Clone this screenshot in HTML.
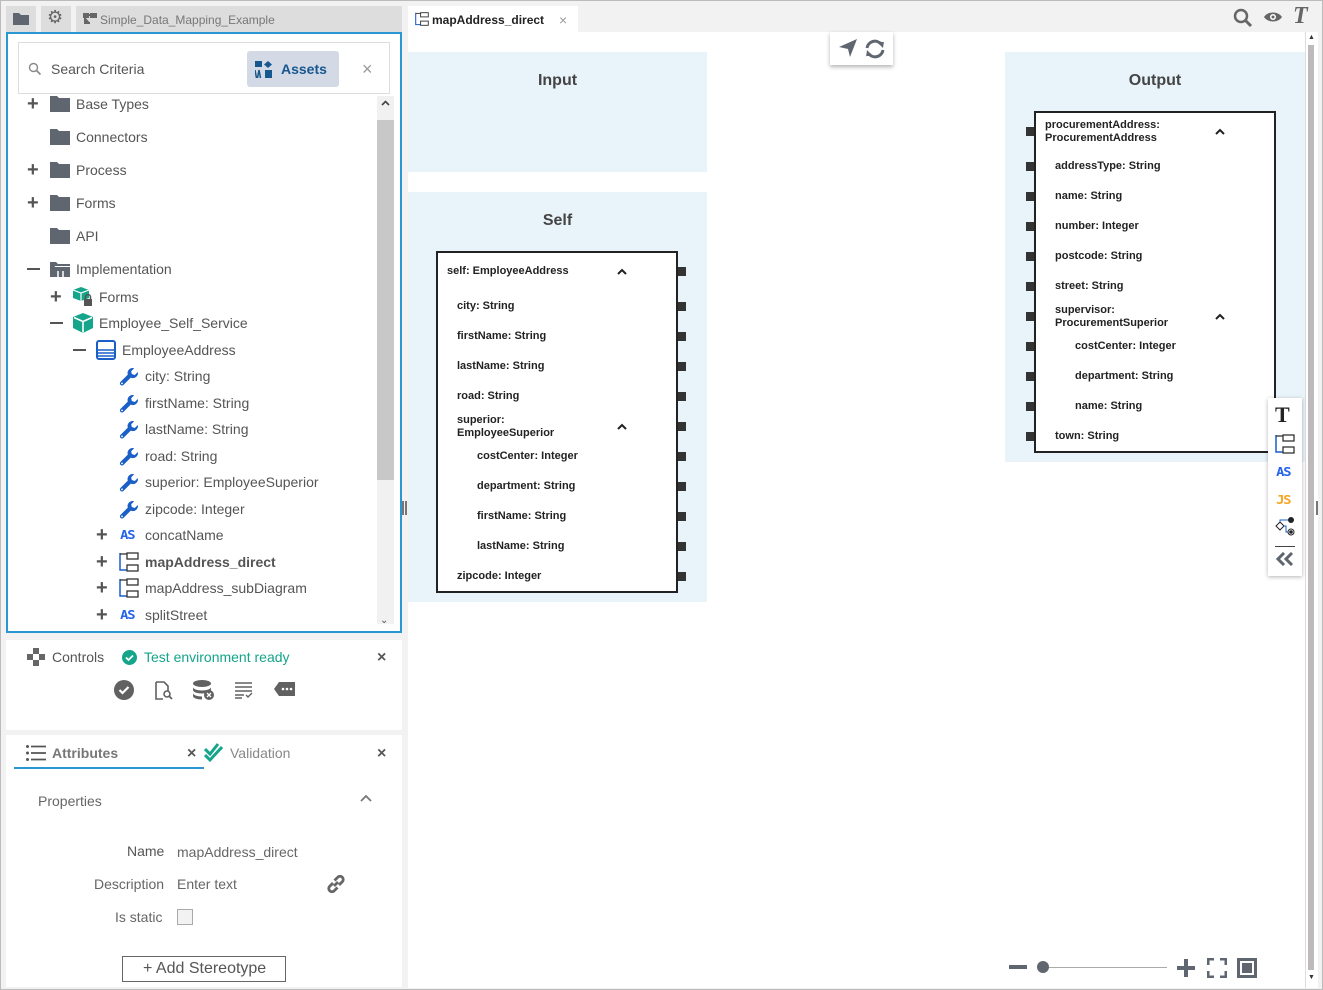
<!DOCTYPE html>
<html><head><meta charset="utf-8"><style>
*{box-sizing:border-box;margin:0;padding:0}
body{width:1323px;height:990px;position:relative;background:#f2f2f2;font-family:"Liberation Sans",sans-serif;overflow:hidden}
.a{position:absolute}
.t{position:absolute;font-size:14px;color:#555;line-height:18px;white-space:nowrap}
.pm{position:absolute;font-size:20px;color:#555;line-height:18px;font-weight:bold}
.d{position:absolute;font-size:11px;font-weight:bold;color:#222;line-height:13px;white-space:nowrap}
.p{position:absolute;width:8px;height:9px;background:#333}
.as{position:absolute;font:bold 12px 'DejaVu Sans Mono',monospace;color:#2563eb;letter-spacing:-1px;transform:scaleX(1.15)}
</style></head><body>
<div class="a" style="left:0;top:0;width:1323px;height:990px;border:1px solid #bbb"></div>
<!-- left top tabs -->
<div class="a" style="left:6px;top:6px;width:30px;height:26px;background:#ddd"></div>
<svg class="a" style="left:13px;top:12px" width="16" height="13"><path d="M0 1h6l2 2h8v10H0z" fill="#5f6670"/></svg>
<div class="a" style="left:41px;top:6px;width:30px;height:26px;background:#ddd"></div>
<div class="a" style="left:47px;top:7px;font-size:18px;color:#666">⚙</div>
<div class="a" style="left:76px;top:6px;width:326px;height:26px;background:#ddd"></div>
<svg class="a" style="left:83px;top:13px" width="14" height="12"><path d="M0 0h5v4H0zM8 0h6v4H8zM2 4v6h5M5 2h3" stroke="#666" stroke-width="2" fill="#666"/></svg>
<div class="t" style="left:100px;top:11px;font-size:12px;color:#777">Simple_Data_Mapping_Example</div>
<!-- tree panel -->
<div class="a" style="left:6px;top:32px;width:396px;height:601px;background:#fff;border:2px solid #2b97d2"></div>
<div class="a" style="left:18px;top:42px;width:372px;height:52px;border:1px solid #ddd;background:#fff"></div>
<svg class="a" style="left:28px;top:62px" width="14" height="14"><circle cx="5.5" cy="5.5" r="4" stroke="#888" stroke-width="1.4" fill="none"/><path d="M8.5 8.5l4 4" stroke="#888" stroke-width="1.6"/></svg>
<div class="t" style="left:51px;top:60px;color:#555">Search Criteria</div>
<div class="a" style="left:247px;top:51px;width:92px;height:36px;background:#d3dae6;border-radius:3px"></div>
<svg class="a" style="left:255px;top:61px" width="19" height="17"><rect x="0" y="0" width="7" height="6" fill="#17578f"/><path d="M13 0l4 3.5-4 3.5-4-3.5z" fill="#17578f"/><rect x="10" y="9" width="7" height="8" fill="#17578f"/><path d="M0 9l1.5 8h1l1.5-8M4 9l1.5 8" stroke="#17578f" stroke-width="1.5" fill="none"/></svg>
<div class="t" style="left:281px;top:60px;color:#17578f;font-weight:bold">Assets</div>
<div class="t" style="left:362px;top:60px;color:#999;font-size:18px">×</div>
<!-- scrollbar -->
<div class="a" style="left:377px;top:96px;width:17px;height:528px;background:#f1f1f1"></div>
<div class="a" style="left:377px;top:120px;width:17px;height:360px;background:#c8c8c8"></div>
<svg class="a" style="left:381px;top:100px" width="9" height="6"><path d="M1 5l3.5-3.5L8 5" stroke="#444" stroke-width="1.6" fill="none"/></svg>
<div class="t" style="left:380px;top:612px;font-size:10px;color:#555">⌄</div>
<!-- tree rows -->
<div class="pm" style="left:27px;top:95px">+</div>
<svg class="a" style="left:50px;top:96px" width="20" height="16"><path d="M0 0h7l2 2h11v14H0z" fill="#5f6670"/></svg>
<div class="t" style="left:76px;top:95px">Base Types</div>
<svg class="a" style="left:50px;top:129px" width="20" height="16"><path d="M0 0h7l2 2h11v14H0z" fill="#5f6670"/></svg>
<div class="t" style="left:76px;top:128px">Connectors</div>
<div class="pm" style="left:27px;top:161px">+</div>
<svg class="a" style="left:50px;top:162px" width="20" height="16"><path d="M0 0h7l2 2h11v14H0z" fill="#5f6670"/></svg>
<div class="t" style="left:76px;top:161px">Process</div>
<div class="pm" style="left:27px;top:194px">+</div>
<svg class="a" style="left:50px;top:195px" width="20" height="16"><path d="M0 0h7l2 2h11v14H0z" fill="#5f6670"/></svg>
<div class="t" style="left:76px;top:194px">Forms</div>
<svg class="a" style="left:50px;top:228px" width="20" height="16"><path d="M0 0h7l2 2h11v14H0z" fill="#5f6670"/></svg>
<div class="t" style="left:76px;top:227px">API</div>
<div class="a" style="left:27px;top:268px;width:13px;height:2px;background:#555"></div>
<svg class="a" style="left:50px;top:262px" width="20" height="15"><path d="M0 0h6l2 2h12v2H5L2 15H0z M4 5h16v10H2z" fill="#5f6670"/><path d="M8 9v6M13 9v6" stroke="#fff" stroke-width="1.5"/></svg>
<div class="t" style="left:76px;top:260px">Implementation</div>
<div class="pm" style="left:50px;top:288px">+</div>
<svg class="a" style="left:73px;top:287px" width="20" height="19"><path d="M8 0l8 3v8l-8 3-8-3V3z" fill="#14a58a"/><path d="M0 3l8 3 8-3M8 6v8" stroke="#fff" stroke-width="1.2" fill="none"/><rect x="11" y="12" width="8" height="7" fill="#555"/><path d="M12.5 12v-2a2.5 2.5 0 0 1 5 0v2" stroke="#555" stroke-width="1.5" fill="none"/></svg>
<div class="t" style="left:99px;top:288px">Forms</div>
<div class="a" style="left:50px;top:322px;width:13px;height:2px;background:#555"></div>
<svg class="a" style="left:73px;top:313px" width="20" height="20"><path d="M10 0l10 4v11l-10 5-10-5V4z" fill="#14a58a"/><path d="M1 4.5l9 4 9-4M10 8.5v11" stroke="#fff" stroke-width="1.6" fill="none"/></svg>
<div class="t" style="left:99px;top:314px">Employee_Self_Service</div>
<div class="a" style="left:73px;top:349px;width:13px;height:2px;background:#555"></div>
<svg class="a" style="left:96px;top:340px" width="20" height="20"><rect x="1" y="1" width="18" height="18" rx="2" fill="#fff" stroke="#1a5fc8" stroke-width="2"/><path d="M1 10h18M1 13h18M1 16h18" stroke="#1a5fc8" stroke-width="1.5"/></svg>
<div class="t" style="left:122px;top:341px">EmployeeAddress</div>
<svg width="0" height="0" style="position:absolute"><defs><symbol id="w" viewBox="0 0 20 20"><path d="M13.5 1a5 5 0 0 0-4.7 6.6L1.5 14.9a2.1 2.1 0 0 0 3 3l7.3-7.3A5 5 0 0 0 18.8 5l-3 3-3-1-.6-2.8 3-3A5 5 0 0 0 13.5 1z" fill="#1a5fc8"/><circle cx="3" cy="16.4" r="0.9" fill="#fff"/></symbol>
<symbol id="sd" viewBox="0 0 20 20"><path d="M1 1v17h7" stroke="#1a5fc8" stroke-width="1.5" fill="none"/><rect x="8" y="1" width="11" height="6" fill="#fff" stroke="#333" stroke-width="1.3"/><rect x="8" y="13" width="11" height="6" fill="#fff" stroke="#333" stroke-width="1.3"/><path d="M1 2h7" stroke="#333" stroke-width="1.3"/></symbol></defs></svg>
<svg class="a" style="left:119px;top:367px" width="20" height="20"><use href="#w"/></svg><div class="t" style="left:145px;top:367px">city: String</div>
<svg class="a" style="left:119px;top:394px" width="20" height="20"><use href="#w"/></svg><div class="t" style="left:145px;top:394px">firstName: String</div>
<svg class="a" style="left:119px;top:420px" width="20" height="20"><use href="#w"/></svg><div class="t" style="left:145px;top:420px">lastName: String</div>
<svg class="a" style="left:119px;top:447px" width="20" height="20"><use href="#w"/></svg><div class="t" style="left:145px;top:447px">road: String</div>
<svg class="a" style="left:119px;top:473px" width="20" height="20"><use href="#w"/></svg><div class="t" style="left:145px;top:473px">superior: EmployeeSuperior</div>
<svg class="a" style="left:119px;top:500px" width="20" height="20"><use href="#w"/></svg><div class="t" style="left:145px;top:500px">zipcode: Integer</div>
<div class="pm" style="left:96px;top:526px">+</div><div class="as" style="left:121px;top:528px">AS</div><div class="t" style="left:145px;top:526px">concatName</div>
<div class="pm" style="left:96px;top:553px">+</div><svg class="a" style="left:119px;top:552px" width="20" height="20"><use href="#sd"/></svg><div class="t" style="left:145px;top:553px;font-weight:bold">mapAddress_direct</div>
<div class="pm" style="left:96px;top:579px">+</div><svg class="a" style="left:119px;top:578px" width="20" height="20"><use href="#sd"/></svg><div class="t" style="left:145px;top:579px">mapAddress_subDiagram</div>
<div class="pm" style="left:96px;top:606px">+</div><div class="as" style="left:121px;top:608px">AS</div><div class="t" style="left:145px;top:606px">splitStreet</div>
<!-- controls panel -->
<div class="a" style="left:6px;top:640px;width:396px;height:90px;background:#fff"></div>
<svg class="a" style="left:27px;top:648px" width="18" height="18"><rect x="6" y="0" width="6" height="6" fill="#666"/><rect x="0" y="6" width="6" height="6" fill="#666"/><rect x="12" y="6" width="6" height="6" fill="#666"/><rect x="6" y="12" width="6" height="6" fill="#666"/></svg>
<div class="t" style="left:52px;top:648px">Controls</div>
<svg class="a" style="left:122px;top:650px" width="15" height="15"><circle cx="7.5" cy="7.5" r="7.5" fill="#14a58a"/><path d="M4 7.5l2.5 2.5 4.5-4.5" stroke="#fff" stroke-width="1.8" fill="none"/></svg>
<div class="t" style="left:144px;top:648px;color:#14a58a">Test environment ready</div>
<div class="t" style="left:377px;top:649px;font-size:16px;font-weight:bold;color:#555">×</div>
<svg class="a" style="left:114px;top:680px" width="20" height="20"><circle cx="10" cy="10" r="10" fill="#616161"/><path d="M5.5 10l3 3 6-6" stroke="#fff" stroke-width="2.2" fill="none"/></svg>
<svg class="a" style="left:155px;top:681px" width="18" height="19"><path d="M1 1h8l4 4v5M1 1v17h7" stroke="#616161" stroke-width="1.6" fill="none"/><circle cx="12" cy="13" r="3" stroke="#616161" stroke-width="1.6" fill="none"/><path d="M14 15l3 3" stroke="#616161" stroke-width="1.8"/></svg>
<svg class="a" style="left:193px;top:680px" width="22" height="20"><ellipse cx="9" cy="3.5" rx="9" ry="3.5" fill="#616161"/><path d="M0 7c0 2 4 3.5 9 3.5s9-1.5 9-3.5v3c0 2-4 3.5-9 3.5S0 12 0 10zM0 13c0 2 4 3.5 9 3.5v3c-5 0-9-1.5-9-3.5z" fill="#616161"/><circle cx="16" cy="15" r="5" fill="#616161"/><path d="M14 13l4 4M18 13l-4 4" stroke="#fff" stroke-width="1.3"/></svg>
<svg class="a" style="left:235px;top:682px" width="18" height="17"><path d="M0 1h17M0 5h17M0 9h17M0 13h9M0 16h7" stroke="#616161" stroke-width="1.4"/><path d="M11 13l2 2 4-4" stroke="#616161" stroke-width="1.4" fill="none"/></svg>
<svg class="a" style="left:274px;top:682px" width="21" height="14"><path d="M5 0h16v14H5L0 7z" fill="#616161"/><circle cx="9" cy="7" r="1.3" fill="#fff"/><circle cx="13" cy="7" r="1.3" fill="#fff"/><circle cx="17" cy="7" r="1.3" fill="#fff"/></svg>
<!-- attributes panel -->
<div class="a" style="left:6px;top:735px;width:396px;height:252px;background:#fff"></div>
<svg class="a" style="left:26px;top:745px" width="20" height="16"><circle cx="1.5" cy="1.5" r="1.5" fill="#555"/><circle cx="1.5" cy="8" r="1.5" fill="#555"/><circle cx="1.5" cy="14.5" r="1.5" fill="#555"/><path d="M5 1.5h15M5 8h15M5 14.5h15" stroke="#555" stroke-width="1.8"/></svg>
<div class="t" style="left:52px;top:744px;color:#777;font-weight:bold">Attributes</div>
<div class="t" style="left:187px;top:745px;font-size:16px;font-weight:bold;color:#555">×</div>
<div class="a" style="left:14px;top:767px;width:190px;height:2px;background:#2b97d2"></div>
<svg class="a" style="left:204px;top:743px" width="20" height="20"><path d="M1 6l5 5 8-10" stroke="#14a58a" stroke-width="3" fill="none"/><path d="M1 12l5 5 12-13" stroke="#14a58a" stroke-width="3" fill="none"/></svg>
<div class="t" style="left:230px;top:744px;color:#888">Validation</div>
<div class="t" style="left:377px;top:745px;font-size:16px;font-weight:bold;color:#555">×</div>
<div class="t" style="left:38px;top:792px;color:#666">Properties</div>
<svg class="a" style="left:360px;top:794px" width="12" height="8"><path d="M1 7l5-5 5 5" stroke="#777" stroke-width="1.8" fill="none"/></svg>
<div class="t" style="left:127px;top:842px;color:#555">Name</div>
<div class="t" style="left:177px;top:843px;color:#666">mapAddress_direct</div>
<div class="t" style="left:94px;top:875px;color:#666">Description</div>
<div class="t" style="left:177px;top:875px;color:#666">Enter text</div>
<svg class="a" style="left:325px;top:873px" width="22" height="22"><path d="M9 13l4-4M8 10l-3.5 3.5a3.2 3.2 0 0 0 4.5 4.5L12.5 14.5M14 12l3.5-3.5a3.2 3.2 0 0 0-4.5-4.5L9.5 7.5" stroke="#666" stroke-width="2.8" fill="none"/></svg>
<div class="t" style="left:115px;top:908px;color:#666">Is static</div>
<div class="a" style="left:177px;top:909px;width:16px;height:16px;border:1px solid #aaa;background:#f2f2f2"></div>
<div class="a" style="left:122px;top:956px;width:164px;height:26px;border:1px solid #666;background:#fff"></div>
<div class="t" style="left:143px;top:960px;font-size:16px;color:#555">+ Add Stereotype</div>
<!-- splitter -->
<div class="a" style="left:402px;top:501px;width:2px;height:14px;background:#777"></div>
<div class="a" style="left:405px;top:501px;width:2px;height:14px;background:#777"></div>
<!-- right area -->
<div class="a" style="left:408px;top:6px;width:170px;height:26px;background:#fff"></div>
<svg class="a" style="left:415px;top:12px" width="14" height="14"><use href="#sd"/></svg>
<div class="t" style="left:432px;top:11px;font-size:12px;font-weight:bold;color:#222">mapAddress_direct</div>
<div class="t" style="left:559px;top:11px;font-size:14px;color:#999">×</div>
<svg class="a" style="left:1233px;top:8px" width="22" height="20"><circle cx="8" cy="8" r="6" stroke="#666" stroke-width="2.5" fill="none"/><path d="M12 12l6 6" stroke="#666" stroke-width="3"/></svg>
<svg class="a" style="left:1263px;top:11px" width="20" height="12"><path d="M1 6c4-6 14-6 18 0-4 6-14 6-18 0z" fill="#666"/><circle cx="10" cy="6" r="3" fill="#fff"/><circle cx="10" cy="6" r="1.5" fill="#666"/></svg>
<div class="a" style="left:1293px;top:3px;font:italic bold 24px 'Liberation Serif',serif;color:#666">T</div>
<div class="a" style="left:408px;top:32px;width:897px;height:956px;background:#fff"></div>
<div class="a" style="left:1305px;top:32px;width:13px;height:956px;background:#fff;border-left:1px solid #ddd"></div>
<div class="a" style="left:1308px;top:45px;width:6px;height:925px;background:#bdb9bd"></div>
<div class="a" style="left:1308px;top:34px;font-size:7px;color:#333">▲</div>
<div class="a" style="left:1308px;top:974px;font-size:7px;color:#333">▼</div>
<div class="a" style="left:1316px;top:501px;width:2px;height:14px;background:#777"></div>
<!-- floating tool -->
<div class="a" style="left:830px;top:32px;width:63px;height:33px;background:#fff;box-shadow:0 2px 4px rgba(0,0,0,.3)"></div>
<svg class="a" style="left:838px;top:38px" width="20" height="20"><path d="M1 9L19 1l-7 18-2-8z" fill="#5f6670"/></svg>
<svg class="a" style="left:864px;top:39px" width="22" height="20"><path d="M3 9a8 8 0 0 1 14-4M19 11a8 8 0 0 1-14 4" stroke="#5f6670" stroke-width="3" fill="none"/><path d="M13 3h7v-1l-1 7zM9 17H2v1l1-7z" fill="#5f6670"/></svg>
<!-- Input -->
<div class="a" style="left:408px;top:52px;width:299px;height:120px;background:#e8f3fa"></div>
<div class="a" style="left:408px;top:72px;width:299px;text-align:center;font-size:16px;font-weight:bold;color:#444">Input</div>
<!-- Self -->
<div class="a" style="left:408px;top:192px;width:299px;height:410px;background:#e8f3fa"></div>
<div class="a" style="left:408px;top:212px;width:299px;text-align:center;font-size:16px;font-weight:bold;color:#444">Self</div>
<div class="a" style="left:436px;top:251px;width:242px;height:342px;background:#fff;border:2px solid #222"></div>
<div class="d" style="left:447px;top:265px">self: EmployeeAddress</div>
<svg class="a" style="left:617px;top:268px" width="10" height="7"><path d="M1 6l4-4 4 4" stroke="#222" stroke-width="2" fill="none"/></svg>
<div class="d" style="left:457px;top:300px">city: String</div>
<div class="d" style="left:457px;top:330px">firstName: String</div>
<div class="d" style="left:457px;top:360px">lastName: String</div>
<div class="d" style="left:457px;top:390px">road: String</div>
<div class="d" style="left:457px;top:414px">superior:<br>EmployeeSuperior</div>
<svg class="a" style="left:617px;top:423px" width="10" height="7"><path d="M1 6l4-4 4 4" stroke="#222" stroke-width="2" fill="none"/></svg>
<div class="d" style="left:477px;top:450px">costCenter: Integer</div>
<div class="d" style="left:477px;top:480px">department: String</div>
<div class="d" style="left:477px;top:510px">firstName: String</div>
<div class="d" style="left:477px;top:540px">lastName: String</div>
<div class="d" style="left:457px;top:570px">zipcode: Integer</div>
<div class="p" style="left:678px;top:267px"></div><div class="p" style="left:678px;top:302px"></div><div class="p" style="left:678px;top:332px"></div><div class="p" style="left:678px;top:362px"></div><div class="p" style="left:678px;top:392px"></div><div class="p" style="left:678px;top:422px"></div><div class="p" style="left:678px;top:452px"></div><div class="p" style="left:678px;top:482px"></div><div class="p" style="left:678px;top:512px"></div><div class="p" style="left:678px;top:542px"></div><div class="p" style="left:678px;top:572px"></div>
<!-- Output -->
<div class="a" style="left:1005px;top:52px;width:300px;height:410px;background:#e8f3fa"></div>
<div class="a" style="left:1005px;top:72px;width:300px;text-align:center;font-size:16px;font-weight:bold;color:#444">Output</div>
<div class="a" style="left:1034px;top:111px;width:242px;height:342px;background:#fff;border:2px solid #222"></div>
<div class="d" style="left:1045px;top:119px">procurementAddress:<br>ProcurementAddress</div>
<svg class="a" style="left:1215px;top:128px" width="10" height="7"><path d="M1 6l4-4 4 4" stroke="#222" stroke-width="2" fill="none"/></svg>
<div class="d" style="left:1055px;top:160px">addressType: String</div>
<div class="d" style="left:1055px;top:190px">name: String</div>
<div class="d" style="left:1055px;top:220px">number: Integer</div>
<div class="d" style="left:1055px;top:250px">postcode: String</div>
<div class="d" style="left:1055px;top:280px">street: String</div>
<div class="d" style="left:1055px;top:304px">supervisor:<br>ProcurementSuperior</div>
<svg class="a" style="left:1215px;top:313px" width="10" height="7"><path d="M1 6l4-4 4 4" stroke="#222" stroke-width="2" fill="none"/></svg>
<div class="d" style="left:1075px;top:340px">costCenter: Integer</div>
<div class="d" style="left:1075px;top:370px">department: String</div>
<div class="d" style="left:1075px;top:400px">name: String</div>
<div class="d" style="left:1055px;top:430px">town: String</div>
<div class="p" style="left:1026px;top:127px"></div><div class="p" style="left:1026px;top:162px"></div><div class="p" style="left:1026px;top:192px"></div><div class="p" style="left:1026px;top:222px"></div><div class="p" style="left:1026px;top:252px"></div><div class="p" style="left:1026px;top:282px"></div><div class="p" style="left:1026px;top:312px"></div><div class="p" style="left:1026px;top:342px"></div><div class="p" style="left:1026px;top:372px"></div><div class="p" style="left:1026px;top:402px"></div><div class="p" style="left:1026px;top:432px"></div>
<!-- side toolbar -->
<div class="a" style="left:1268px;top:398px;width:34px;height:178px;background:#fff;box-shadow:0 1px 4px rgba(0,0,0,.3)"></div>
<div class="a" style="left:1275px;top:402px;font:bold 22px 'Liberation Serif',serif;color:#222">T</div>
<svg class="a" style="left:1275px;top:434px" width="20" height="20"><use href="#sd"/></svg>
<div class="as" style="left:1277px;top:465px">AS</div>
<div class="as" style="left:1277px;top:493px;color:#f5a623">JS</div>
<svg class="a" style="left:1275px;top:517px" width="21" height="22"><path d="M5 5l4 4-4 4-4-4z" stroke="#222" fill="#fff"/><path d="M5 5V3h10M9 9h2v6h4" stroke="#1a5fc8" stroke-width="1" fill="none"/><circle cx="16" cy="3" r="3" fill="#222"/><circle cx="16" cy="15" r="3" stroke="#222" fill="#fff"/><circle cx="16" cy="15" r="1.8" fill="#222"/></svg>
<div class="a" style="left:1275px;top:546px;width:20px;height:1px;background:#444"></div>
<svg class="a" style="left:1276px;top:552px" width="18" height="14"><path d="M8 1L2 7l6 6M16 1l-6 6 6 6" stroke="#5f6670" stroke-width="3" fill="none"/></svg>
<!-- zoom bar -->
<div class="a" style="left:1009px;top:965px;width:18px;height:4px;background:#5f6670"></div>
<div class="a" style="left:1042px;top:967px;width:125px;height:1px;background:#aaa"></div>
<div class="a" style="left:1037px;top:961px;width:12px;height:12px;border-radius:6px;background:#5f6670"></div>
<div class="a" style="left:1177px;top:966px;width:18px;height:4px;background:#5f6670"></div>
<div class="a" style="left:1184px;top:959px;width:4px;height:18px;background:#5f6670"></div>
<svg class="a" style="left:1207px;top:958px" width="20" height="20"><path d="M1 7V1h6M13 1h6v6M19 13v6h-6M7 19H1v-6" stroke="#5f6670" stroke-width="3" fill="none"/></svg>
<div class="a" style="left:1237px;top:958px;width:20px;height:20px;border:3px solid #5f6670"></div>
<div class="a" style="left:1242px;top:963px;width:10px;height:10px;background:#5f6670"></div>
</body></html>
